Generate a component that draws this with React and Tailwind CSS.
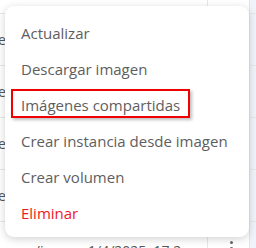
import React from "react";

const items = [
  "Actualizar",
  "Descargar imagen",
  "Imágenes compartidas",
  "Crear instancia desde imagen",
  "Crear volumen",
];

function Row({ children }) {
  return (
    <div className="flex h-[52px] shrink-0 border-t border-[#e6e7eb]">
      <div className="flex w-[207px] items-center text-[14px] text-[#555]">{children}</div>
      <div className="w-[42px] border-l border-[#e6e7eb]"></div>
      <div className="flex-1 bg-[#f2f2f9] border-l border-[#e3e3ec]"></div>
    </div>
  );
}

export default function App() {
  return (
    <div
      className="relative h-[248px] w-[256px] overflow-hidden bg-white"
      style={{ fontFamily: '"Open Sans", "Noto Sans", sans-serif' }}
    >
      {/* table underneath */}
      <div className="flex flex-col">
        <div className="flex h-[13px] shrink-0">
          <div className="w-[207px]"></div>
          <div className="w-[42px] border-l border-[#e6e7eb]"></div>
          <div className="flex-1 bg-[#f2f2f9] border-l border-[#e3e3ec]"></div>
        </div>
        <Row>
          <span className="-ml-[2px]">e</span>
        </Row>
        <Row>
          <span className="-ml-[2px]">e</span>
        </Row>
        <Row>
          <span className="-ml-[2px]">e</span>
        </Row>
        <Row>
          <span className="-ml-[2px]">e</span>
        </Row>
        <div className="flex h-[52px] shrink-0 border-t border-[#e6e7eb]">
          <div className="flex w-[207px] pt-[18px] text-[14px] text-[#555]">
            <span className="-ml-[1px] w-[89px]">omas/i</span>
            <span>1/4/2025, 17:2</span>
          </div>
          <div className="flex w-[42px] justify-center border-l border-[#e6e7eb] pt-[19px]">
            <div className="flex flex-col gap-[3px] pl-[6px]">
              <span className="h-[3px] w-[3px] rounded-full bg-[#666]"></span>
              <span className="h-[3px] w-[3px] rounded-full bg-[#666]"></span>
              <span className="h-[3px] w-[3px] rounded-full bg-[#666]"></span>
            </div>
          </div>
          <div className="flex-1 bg-[#f2f2f9] border-l border-[#e3e3ec]"></div>
        </div>
      </div>

      {/* dropdown menu */}
      <div className="absolute left-[5px] top-[6px] w-[244px] rounded-[9px] bg-white pt-[9px] pb-[6px] shadow-[0_2px_8px_rgba(0,0,0,0.18)]">
        {items.map((t) => (
          <div key={t} className="flex h-9 items-center pl-4 text-[15px] text-[#5e5e5e]">
            {t}
          </div>
        ))}
        <div className="flex h-9 items-center pl-4 text-[15px] text-[#f0191e]">Eliminar</div>
      </div>

      {/* annotation box */}
      <div className="absolute left-[11px] top-[89px] h-[29px] w-[179px] border-2 border-[#f00000] shadow-[2px_2px_3px_rgba(0,0,0,0.25)]"></div>
    </div>
  );
}
